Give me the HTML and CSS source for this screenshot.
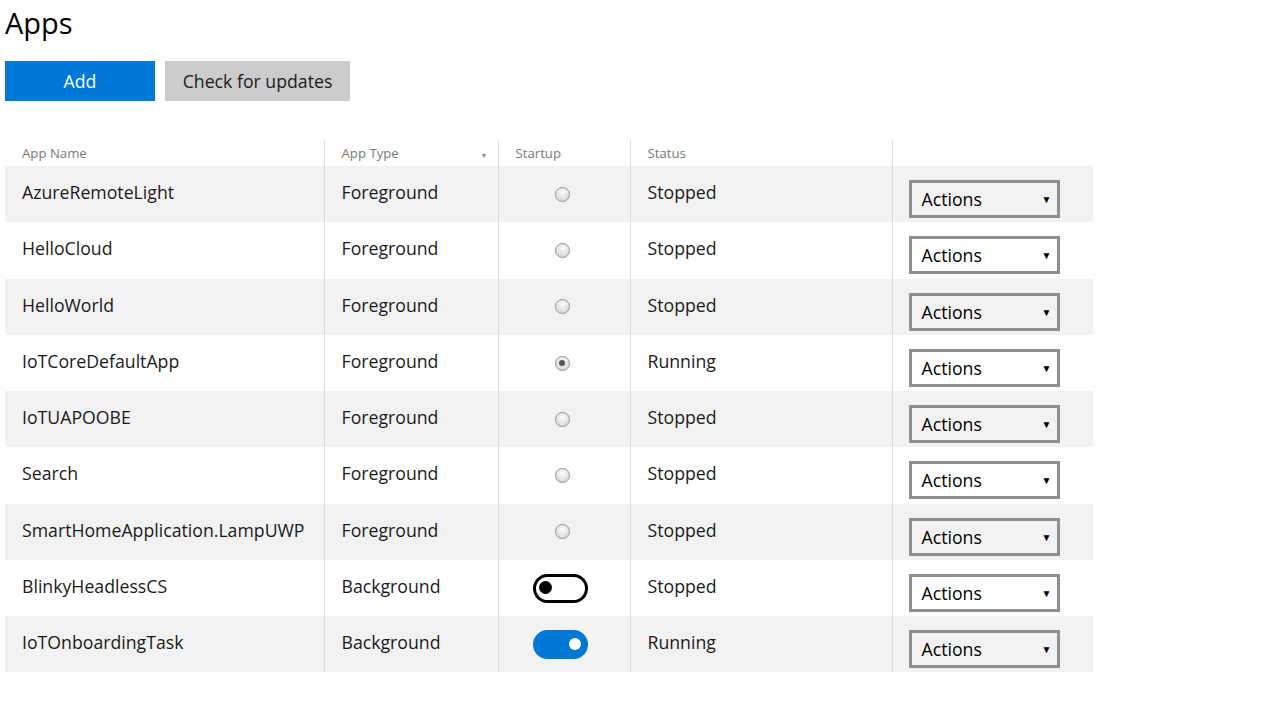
FILE: index.html
```html
<!DOCTYPE html>
<html>
<head>
<meta charset="utf-8">
<title>Apps</title>
<link rel="stylesheet" href="styles.css">
</head>
<body>
<h1 class="title">Apps</h1>
<div class="toolbar">
  <button class="btn btn-primary">Add</button>
  <button class="btn btn-secondary">Check for updates</button>
</div>
<table class="apps">
  <thead>
    <tr>
      <th class="c-name">App Name</th>
      <th class="c-type">App Type<span class="sort">▼</span></th>
      <th class="c-startup">Startup</th>
      <th class="c-status">Status</th>
      <th class="c-actions"></th>
    </tr>
  </thead>
  <tbody>
    <tr class="odd"><td>AzureRemoteLight</td><td>Foreground</td><td class="center"><span class="radio"></span></td><td>Stopped</td><td class="act"><div class="select">Actions<span class="caret">▼</span></div></td></tr>
    <tr><td>HelloCloud</td><td>Foreground</td><td class="center"><span class="radio"></span></td><td>Stopped</td><td class="act"><div class="select">Actions<span class="caret">▼</span></div></td></tr>
    <tr class="odd"><td>HelloWorld</td><td>Foreground</td><td class="center"><span class="radio"></span></td><td>Stopped</td><td class="act"><div class="select">Actions<span class="caret">▼</span></div></td></tr>
    <tr><td>IoTCoreDefaultApp</td><td>Foreground</td><td class="center"><span class="radio checked"></span></td><td>Running</td><td class="act"><div class="select">Actions<span class="caret">▼</span></div></td></tr>
    <tr class="odd"><td>IoTUAPOOBE</td><td>Foreground</td><td class="center"><span class="radio"></span></td><td>Stopped</td><td class="act"><div class="select">Actions<span class="caret">▼</span></div></td></tr>
    <tr><td>Search</td><td>Foreground</td><td class="center"><span class="radio"></span></td><td>Stopped</td><td class="act"><div class="select">Actions<span class="caret">▼</span></div></td></tr>
    <tr class="odd"><td>SmartHomeApplication.LampUWP</td><td>Foreground</td><td class="center"><span class="radio"></span></td><td>Stopped</td><td class="act"><div class="select">Actions<span class="caret">▼</span></div></td></tr>
    <tr><td>BlinkyHeadlessCS</td><td>Background</td><td class="center"><span class="toggle"><span class="knob"></span></span></td><td>Stopped</td><td class="act"><div class="select">Actions<span class="caret">▼</span></div></td></tr>
    <tr class="odd"><td>IoTOnboardingTask</td><td>Background</td><td class="center"><span class="toggle on"><span class="knob"></span></span></td><td>Running</td><td class="act"><div class="select">Actions<span class="caret">▼</span></div></td></tr>
  </tbody>
</table>
</body>
</html>
```
FILE: styles.css
```css
html, body {
  margin: 0;
  padding: 0;
  background: #ffffff;
}
body {
  padding: 0 5px;
  font-family: "Open Sans", "Noto Sans", sans-serif;
  color: #1a1a1a;
}
.title {
  margin: 0;
  padding-top: 4px;
  font-size: 29px;
  font-weight: 400;
  line-height: 38px;
  color: #000;
}
.toolbar {
  display: flex;
  gap: 10px;
  margin-top: 19px;
}
.btn {
  height: 40px;
  border: none;
  font-family: inherit;
  font-size: 17.7px;
  padding: 0;
  cursor: pointer;
}
.btn-primary {
  width: 150px;
  background: #0078d7;
  color: #fff;
}
.btn-secondary {
  width: 185px;
  background: #cccccc;
  color: #1a1a1a;
}
.apps {
  margin-top: 39px;
  border-collapse: collapse;
  width: 1088px;
  table-layout: fixed;
}
.apps th {
  box-sizing: border-box;
  height: 26px;
  padding: 0 0 0 17px;
  text-align: left;
  font-size: 13.2px;
  font-weight: 400;
  color: #7a7a7a;
  vertical-align: middle;
  position: relative;
}
.apps th + th, .apps td + td {
  border-left: 1px solid #dcdcdc;
}
.c-name { width: 319px; }
.c-type { width: 174px; }
.c-startup { width: 132px; }
.c-status { width: 262px; }
.sort {
  position: absolute;
  right: 10px;
  top: 11px;
  font-size: 7px;
  color: #888;
}
.apps td {
  height: 56.25px;
  box-sizing: border-box;
  padding: 13px 0 0 17px;
  vertical-align: top;
  font-size: 17.7px;
  line-height: 26px;
}
.apps tr.odd td {
  background: #f2f2f2;
}
.apps td.center {
  padding: 0 4px 0 0;
  text-align: center;
  vertical-align: middle;
}
.apps td.act {
  padding: 14px 0 0 16px;
}
.radio {
  display: inline-block;
  width: 15px;
  height: 15px;
  box-sizing: border-box;
  border-radius: 50%;
  border: 1px solid #9a9a9a;
  background: radial-gradient(circle at 50% 35%, #fafafa 0%, #e4e4e4 55%, #c8c8c8 100%);
  box-shadow: 0 0 1px rgba(0,0,0,0.2);
  position: relative;
  vertical-align: middle;
  top: -2px;
}
.radio.checked::after {
  content: "";
  position: absolute;
  left: 3.5px;
  top: 3.5px;
  width: 6px;
  height: 6px;
  border-radius: 50%;
  background: #555;
}
.toggle {
  display: inline-block;
  width: 55px;
  height: 29px;
  margin-right: 4px;
  box-sizing: border-box;
  border: 3px solid #000;
  border-radius: 15px;
  background: #fff;
  position: relative;
  vertical-align: middle;
}
.toggle .knob {
  position: absolute;
  left: 3px;
  top: 4px;
  width: 13px;
  height: 13px;
  border-radius: 50%;
  background: #000;
}
.toggle.on {
  background: #0078d7;
  border-color: #0078d7;
}
.toggle.on .knob {
  left: auto;
  right: 4px;
  top: 5px;
  width: 12px;
  height: 12px;
  background: #fff;
}
.select {
  width: 151px;
  height: 38px;
  box-sizing: border-box;
  border: 3px solid #8f8f8f;
  display: flex;
  align-items: center;
  justify-content: space-between;
  padding: 0 5px 0 10px;
  font-size: 17.7px;
  color: #000;
}
.caret {
  font-size: 10px;
}
```
